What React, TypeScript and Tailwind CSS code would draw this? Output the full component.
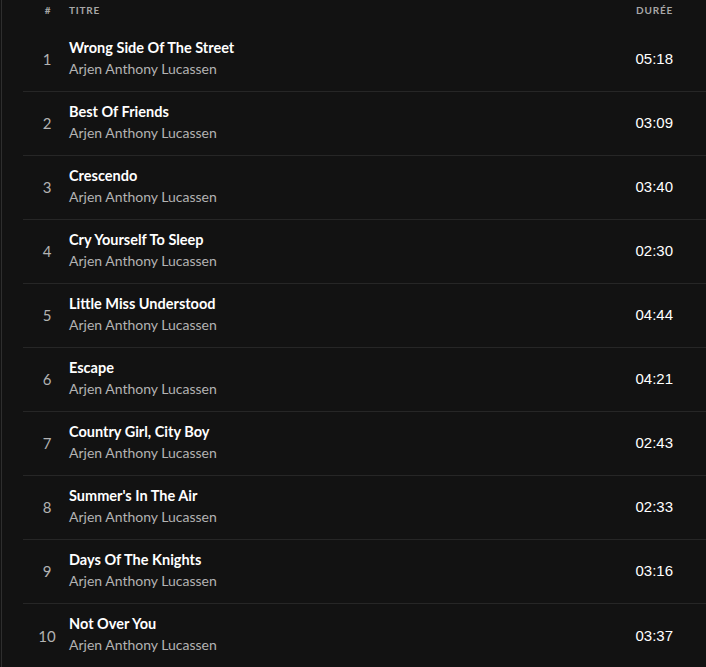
const TRACKS = [
  { title: 'Wrong Side Of The Street', time: '05:18' },
  { title: 'Best Of Friends', time: '03:09' },
  { title: 'Crescendo', time: '03:40' },
  { title: 'Cry Yourself To Sleep', time: '02:30' },
  { title: 'Little Miss Understood', time: '04:44' },
  { title: 'Escape', time: '04:21' },
  { title: 'Country Girl, City Boy', time: '02:43' },
  { title: "Summer's In The Air", time: '02:33' },
  { title: 'Days Of The Knights', time: '03:16' },
  { title: 'Not Over You', time: '03:37' },
]

const ARTIST = 'Arjen Anthony Lucassen'

export default function App() {
  return (
    <div className="min-h-[667px] bg-[#121212] pl-px">
      <div className="min-h-[667px] border-l border-[#2e2e2e] pl-[21px] font-['Lato',sans-serif]">
        <div className="flex h-[28px] items-start pt-[4px] pr-[33px] text-[10px] leading-[12px] font-bold tracking-[0.08em] text-[#a7a7a7]">
          <span className="w-[46px] pl-[4px] text-center">#</span>
          <span className="flex-1">TITRE</span>
          <span>DURÉE</span>
        </div>
        <ul>
          {TRACKS.map((t, i) => (
            <li
              key={t.title}
              className="flex h-[64px] items-center border-b border-[#262626] pr-[33px] last:border-b-0"
            >
              <span className="w-[46px] pl-[2px] text-center text-[15px] text-[#b3b3b3]">{i + 1}</span>
              <div className="flex flex-1 flex-col pb-[3px]">
                <span className="text-[14.5px] leading-[20px] font-bold text-white">{t.title}</span>
                <span className="text-[14px] leading-[21px] text-[#b3b3b3]">{ARTIST}</span>
              </div>
              <span className="font-['Liberation_Sans',sans-serif] text-[15px] text-white">{t.time}</span>
            </li>
          ))}
        </ul>
      </div>
    </div>
  )
}
